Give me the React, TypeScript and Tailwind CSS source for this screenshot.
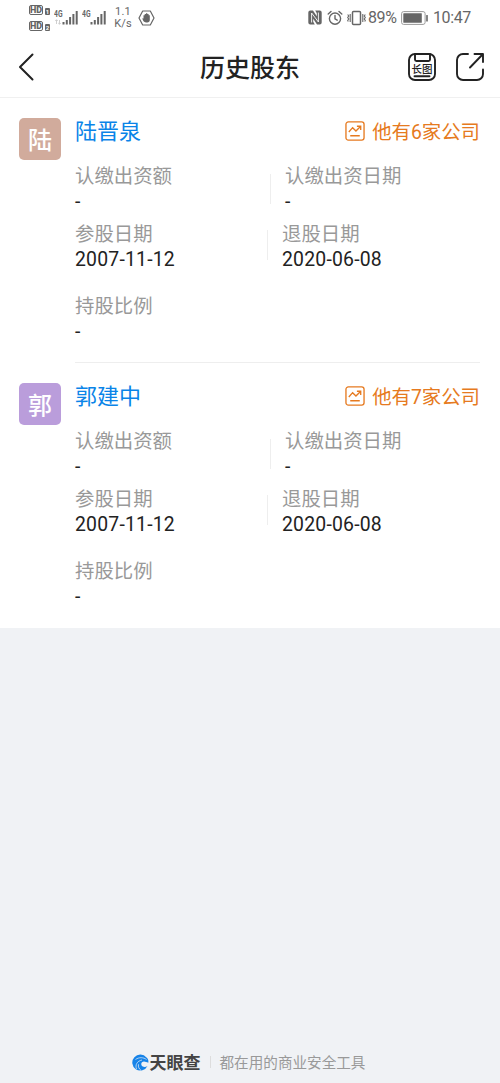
import React from "react";

type Shareholder = {
  name: string;
  avatarClass: string;
  companies: number;
  amount: string;
  amountDate: string;
  joinDate: string;
  exitDate: string;
  ratio: string;
};

const shareholders: Shareholder[] = [
  {
    name: "陆晋泉",
    avatarClass: "bg-[#d1ab9c]",
    companies: 6,
    amount: "-",
    amountDate: "-",
    joinDate: "2007-11-12",
    exitDate: "2020-06-08",
    ratio: "-",
  },
  {
    name: "郭建中",
    avatarClass: "bg-[#ba9ddb]",
    companies: 7,
    amount: "-",
    amountDate: "-",
    joinDate: "2007-11-12",
    exitDate: "2020-06-08",
    ratio: "-",
  },
];

const HdBadge = ({ sim }: { sim: string }) => (
  <div className="flex items-end gap-[2px] h-[10px]">
    <span className="w-[14px] h-[10px] rounded-[2px] border border-[#666] text-[9px] leading-[8.500px] font-black text-center">
      HD
    </span>
    <span className="w-[5px] h-[7px] rounded-[1px] bg-[#666] text-white text-[6px] leading-[7px] font-bold text-center">
      {sim}
    </span>
  </div>
);

const Signal = ({ arrows }: { arrows?: boolean }) => (
  <svg width="25" height="18" viewBox="0 0 25 18" fill="#666">
    <text x="0" y="8" fontSize="9" fontWeight="700" textLength="8.5" lengthAdjust="spacingAndGlyphs">
      4G
    </text>
    {arrows && (
      <path d="M2.500 15v-4M1.200 12l1.300-1.300L3.800 12M5.500 11v4M4.200 14l1.300 1.300L6.800 14" fill="none" stroke="#c4c4c4" strokeWidth=".8" />
    )}
    <path d="M8.500 13h2v2.500h-2zM11.800 11h2v4.500h-2zM15.100 8h2v7.500h-2zM18.400 5h2v10.500h-2zM21.700 2h2v13.500h-2z" />
  </svg>
);

const StatusBar = () => (
  <div className="flex items-center h-[35px] pl-[29px] pr-[29px] text-[#666]">
    <div className="flex flex-col gap-[6px]">
      <HdBadge sim="1" />
      <HdBadge sim="2" />
    </div>
    <div className="flex gap-[3px] ml-1">
      <Signal arrows />
      <Signal />
    </div>
    <div className="ml-[7px] w-[18px] text-[11px] leading-[12px] text-center tracking-[0.200px]">
      <div>1.1</div>
      <div>K/s</div>
    </div>
    <svg className="ml-[6px]" width="17" height="16" viewBox="0 0 17 16">
      <path d="M4.700 1h7.600L16 8l-3.700 7H4.700L1 8z" fill="none" stroke="#666" strokeWidth="1.200" strokeLinejoin="round" />
      <path d="M4.300 8.300l1.200.3V5.200h1.200V4h1.300v-.7h1.300V4h1.300v1.200h1.200V10c0 1.500-1 2.500-2.500 2.500H8C6 12.500 4.700 10.500 4.300 8.300z" fill="#666" />
    </svg>
    <div className="flex items-center ml-auto">
      <svg width="14" height="15" viewBox="0 0 14 15">
        <path d="M2.300.5H5l3.800 5.800V3.200L7.200.5h4.500a2 2 0 0 1 2 2v10a2 2 0 0 1-2 2H9L5.200 8.700v3.100l1.600 2.700H2.300a2 2 0 0 1-2-2v-10a2 2 0 0 1 2-2z" fill="#666" />
        <path d="M3.600 12.500V3l6.800 9V2.500" fill="none" stroke="#fff" strokeWidth=".9" />
      </svg>
      <svg className="ml-[5px]" width="16" height="16" viewBox="0 0 16 16" fill="none" stroke="#666" strokeWidth="1.400" strokeLinecap="round">
        <circle cx="8" cy="8.600" r="5.600" />
        <path d="M8 5.500v3.300l2.200 1.400M1.200 4L4 1.500M14.800 4L12 1.500" />
      </svg>
      <svg className="ml-[4px]" width="19" height="16" viewBox="0 0 19 16" fill="none" stroke="#666" strokeWidth="1.500">
        <rect x="5.500" y="1.500" width="8" height="13" rx="1" />
        <path d="M.7 4.500l1 1.500-1 1.500 1 1.500-1 1.500.6 1M3.200 4v8M18.300 4.500l-1 1.500 1 1.500-1 1.500 1 1.500-.6 1M15.800 4v8" strokeWidth="1.100" />
      </svg>
      <span className="ml-[2px] w-[29px] text-[16px] leading-5 tracking-[-0.400px]">89%</span>
      <svg className="ml-[4px]" width="28" height="14" viewBox="0 0 28 14">
        <rect x=".6" y=".6" width="23.500" height="12.800" rx="2" fill="none" stroke="#999" strokeWidth="1" />
        <rect x="2.300" y="2.300" width="18.500" height="9.400" rx=".5" fill="#666" />
        <rect x="25.200" y="4" width="1.600" height="6.500" rx=".5" fill="#666" />
      </svg>
      <span className="ml-1 text-[16px] leading-5 w-[38px] tracking-[-0.400px]">10:47</span>
    </div>
  </div>
);

const Header = () => (
  <div className="relative flex items-center justify-between h-[63px] pl-[18px] pr-[15px] pt-px border-b border-[#f0f0f0]">
    <svg width="16" height="28" viewBox="0 0 16 28" fill="none" stroke="#222" strokeWidth="2" strokeLinecap="round" strokeLinejoin="round">
      <path d="M14.500 1.500L2 14l12.500 12.500" />
    </svg>
    <h1 className="absolute left-0 right-0 top-4 text-center text-[25px] leading-[36px] font-medium text-[#222] pointer-events-none">
      历史股东
    </h1>
    <div className="flex items-center gap-[18px]">
      <svg width="30" height="30" viewBox="0 0 30 30" fill="none" stroke="#222" strokeWidth="1.900">
        <rect x="2" y="2" width="26" height="26" rx="6" />
        <path d="M8 2v5.500a1.500 1.500 0 0 0 1.500 1.500h12A1.500 1.500 0 0 0 23 7.500V2M7.500 24.300h15" strokeLinecap="round" />
        <text x="4.500" y="20.500" fontSize="10.500" fontWeight="500" fill="#222" stroke="none">
          长图
        </text>
      </svg>
      <svg width="30" height="30" viewBox="0 0 30 30" fill="none" stroke="#222" strokeWidth="1.900" strokeLinecap="round" strokeLinejoin="round">
        <path d="M13 2H8a6 6 0 0 0-6 6v14a6 6 0 0 0 6 6h14a6 6 0 0 0 6-6v-4.500M19.500 2H28v8M28 2L15 15.500" />
      </svg>
    </div>
  </div>
);

const Field = ({ label, value }: { label: string; value: string }) => (
  <div className="text-[19.400px]">
    <div className="h-[26px] leading-[30px] text-[#999]">{label}</div>
    <div className="h-[26px] leading-[27px] text-[#222] tracking-[0.200px]">{value}</div>
  </div>
);

const ShareholderCard = ({ item }: { item: Shareholder }) => (
  <div className="flex h-[265px] pl-[19px] pr-5 pt-5">
    <div
      className={`flex items-center justify-center shrink-0 w-[42px] h-[42px] pt-[3px] rounded-[5px] text-white text-[24px] font-medium ${item.avatarClass}`}
    >
      {item.name[0]}
    </div>
    <div className="flex-1 ml-[14px] border-b border-[#eee]">
      <div className="flex items-center justify-between h-[26px]">
        <span className="h-[26px] text-[22px] leading-[28px] text-[#0a84e8]">{item.name}</span>
        <div className="flex items-center text-[#e67a20]">
          <svg width="20" height="20" viewBox="0 0 21 21" fill="none" stroke="currentColor" strokeWidth="1.400">
            <rect x="1" y="1" width="19" height="19" rx="2.500" />
            <path d="M4 11.500l4-4.500 3.500 3.500L16 6M12.500 5.500h4v4M5.500 15.500h10" />
          </svg>
          <span className="h-[26px] ml-[7px] text-[19.400px] leading-[30px]">他有{item.companies}家公司</span>
        </div>
      </div>
      <div className="flex mt-[18px]">
        <div className="w-[195px]">
          <Field label="认缴出资额" value={item.amount} />
        </div>
        <div className="w-px h-[30px] mt-3 mr-[14px] bg-[#eee]" />
        <Field label="认缴出资日期" value={item.amountDate} />
      </div>
      <div className="flex mt-[6px]">
        <div className="w-[192px]">
          <Field label="参股日期" value={item.joinDate} />
        </div>
        <div className="w-px h-[30px] mt-[10px] mr-[14px] bg-[#eee]" />
        <Field label="退股日期" value={item.exitDate} />
      </div>
      <div className="mt-5">
        <Field label="持股比例" value={item.ratio} />
      </div>
    </div>
  </div>
);

const Footer = () => (
  <div className="flex items-center justify-center h-[42px] pr-[3px]">
    <svg width="17" height="17" viewBox="0 0 17 17">
      <path d="M14.500 3.500A8 8 0 1 0 15.500 12c-2 1.500-5 1.300-6-.7-.8-2 .5-3.800 2.500-3.800 1.500 0 2.500.8 4.300 1.200C16.700 6.500 16 4.800 14.500 3.500z" fill="#1683e8" />
      <path d="M3.500 5.500C7 3 11.500 3.200 14.500 5.500M4.500 15c-1.500-4 .5-8 5.500-9M9 16.300c-2-1.300-3-3.500-2.500-6" fill="none" stroke="#f0f2f5" strokeWidth=".7" />
    </svg>
    <span className="h-6 ml-[1px] text-[17px] leading-[26px] font-bold text-[#444]">天眼查</span>
    <div className="w-px h-3 mx-[9px] bg-[#ddd]" />
    <span className="h-6 text-[14.600px] leading-[26px] text-[#999]">都在用的商业安全工具</span>
  </div>
);

const App = () => {
  return (
    <div className="flex flex-col w-[500px] h-[1083px] overflow-hidden bg-[#f0f2f5] font-[Roboto,'Noto_Sans_CJK_SC',sans-serif]">
      <div className="bg-white">
        <StatusBar />
        <Header />
        <div className="h-[530px] overflow-hidden [&>*:last-child>*:last-child]:border-transparent">
          {shareholders.map((item) => (
            <ShareholderCard key={item.name} item={item} />
          ))}
        </div>
      </div>
      <div className="mt-auto">
        <Footer />
      </div>
    </div>
  );
};

export default App;
